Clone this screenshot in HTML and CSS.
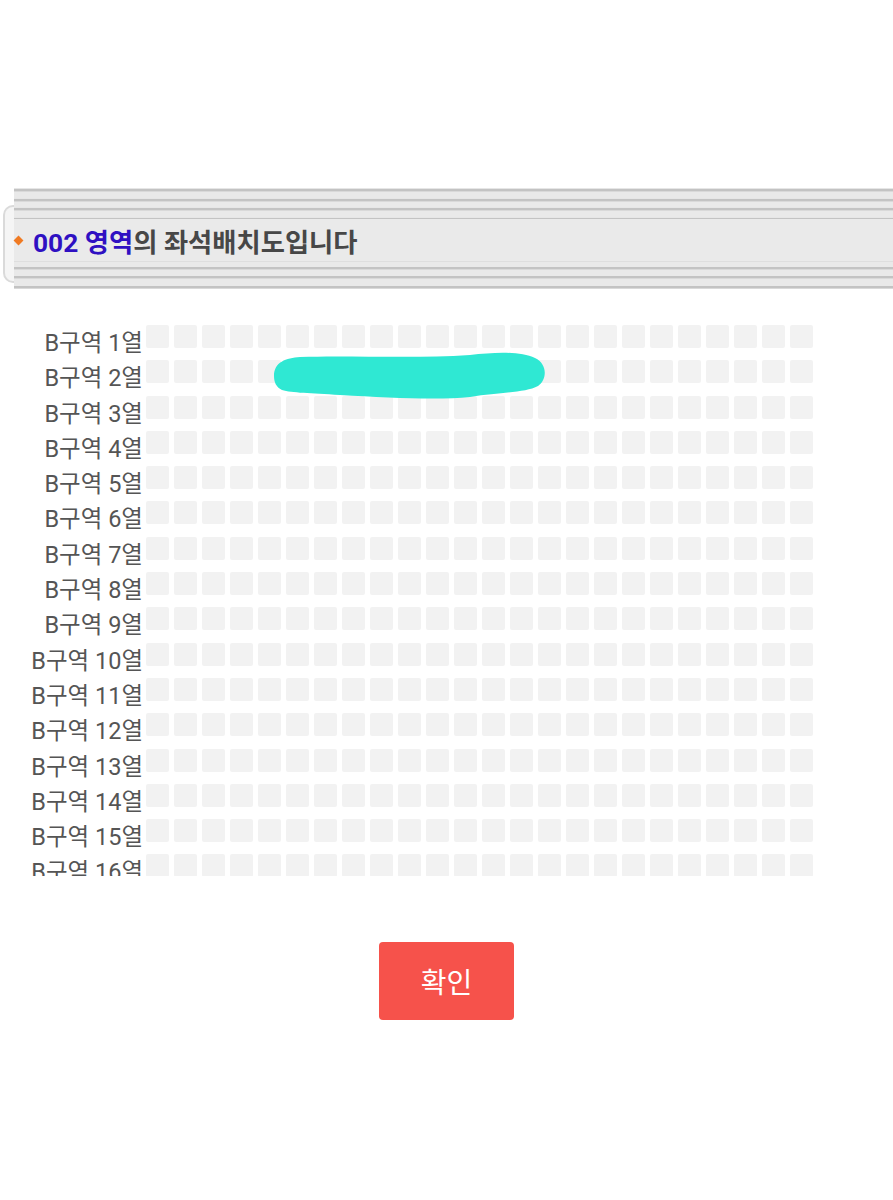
FILE: index.html
```html
<!DOCTYPE html>
<html lang="ko">
<head>
    <meta charset="UTF-8">
    <meta name="viewport" content="width=device-width, initial-scale=1.0">
    <title>좌석배치도</title>
    <link rel="stylesheet" href="styles.css">
</head>
<body>
    <div class="page">
        <header class="zone-bar">
            <span class="bar-cap"></span>
            <div class="bar-body">
                <div class="stripes stripes-top"></div>
                <h2 class="zone-title">
                    <span class="bullet"></span>
                    <span class="title-text"><span class="zone-name">002 영역</span>의 좌석배치도입니다</span>
                </h2>
                <div class="stripes stripes-bottom"></div>
            </div>
        </header>

        <div class="seat-map">
            <div id="seatRows"></div>
            <svg class="scribble" viewBox="0 0 280 52" xmlns="http://www.w3.org/2000/svg">
                <path d="M4 26 C4 12 16 8 30 7 C80 5 140 9 200 5 C225 2 250 1 265 8 C278 14 277 30 268 36 C255 43 230 42 200 47 C170 50 120 48 70 45 C40 43 22 43 12 40 C6 37 4 32 4 26 Z"></path>
            </svg>
        </div>

        <div class="actions">
            <button type="button" class="confirm-button">확인</button>
        </div>
    </div>

    <script>
        const seatRows = document.getElementById('seatRows');
        const ROWS = 16;
        const SEATS = 24;

        for (let r = 1; r <= ROWS; r++) {
            const row = document.createElement('div');
            row.className = 'seat-row';

            const label = document.createElement('span');
            label.className = 'row-label';
            label.textContent = `B구역 ${r}열`;
            row.appendChild(label);

            const seats = document.createElement('div');
            seats.className = 'seats';
            for (let s = 0; s < SEATS; s++) {
                const seat = document.createElement('span');
                seat.className = 'seat';
                seats.appendChild(seat);
            }
            row.appendChild(seats);
            seatRows.appendChild(row);
        }
    </script>
</body>
</html>
```

FILE: styles.css
```css
:root {
    --bar-bg: #e9e9e9;
    --bar-line: #c3c3c3;
    --zone-color: #2f10c2;
    --title-color: #474747;
    --label-color: #555;
    --seat-color: #f2f2f2;
    --button-color: #f6524b;
}

* {
    margin: 0;
    padding: 0;
    box-sizing: border-box;
}

body {
    font-family: Roboto, "Noto Sans CJK KR", sans-serif;
    background-color: white;
    color: var(--label-color);
}

.page {
    padding-top: 188px;
}

/* zone header */
.zone-bar {
    display: flex;
    align-items: flex-start;
}

.bar-cap {
    width: 11px;
    height: 78px;
    margin-top: 17px;
    margin-left: 3px;
    border: 2px solid #dadada;
    border-right: none;
    border-radius: 10px 0 0 10px;
    background-color: #f5f5f5;
}

.bar-body {
    flex: 1;
}

.stripes-top {
    height: 31px;
    background: repeating-linear-gradient(to bottom,
        #e6e6e6 0 1px,
        var(--bar-line) 1px 3px,
        #d9d9d9 3px 4px,
        var(--bar-bg) 4px 9.5px);
}

.stripes-bottom {
    height: 27px;
    background: repeating-linear-gradient(to bottom,
        var(--bar-bg) 0 5px,
        var(--bar-line) 5px 7px,
        #d9d9d9 7px 8px,
        var(--bar-bg) 8px 9.5px);
}

.zone-title {
    height: 43px;
    display: flex;
    align-items: center;
    background-color: #eaeaea;
    border-bottom: 1px solid #dedede;
    font-size: 26.3px;
    font-weight: bold;
    color: var(--title-color);
}

.bullet {
    flex-shrink: 0;
    width: 7px;
    height: 7px;
    margin: 0 11px 0 1px;
    background-color: #f07a22;
    transform: rotate(45deg);
}

.title-text {
    white-space: nowrap;
}

.zone-name {
    color: var(--zone-color);
}

/* seat map */
.seat-map {
    position: relative;
    height: 556px;
    margin-top: 31px;
    padding-top: 5px;
    overflow: hidden;
}

.seat-row {
    display: flex;
    height: 35.3px;
}

.row-label {
    width: 143px;
    padding-top: 7px;
    text-align: right;
    font-size: 23.5px;
    line-height: 23px;
    color: var(--label-color);
    white-space: nowrap;
}

.seats {
    display: flex;
    gap: 5px;
    margin-left: 3px;
}

.seat {
    width: 23px;
    height: 23px;
    border-radius: 2px;
    background-color: var(--seat-color);
}

.scribble {
    position: absolute;
    left: 270px;
    top: 30px;
    width: 280px;
    height: 52px;
}

.scribble path {
    fill: #2fe8d3;
}

/* confirm */
.actions {
    display: flex;
    justify-content: center;
    margin-top: 66px;
}

.confirm-button {
    width: 135px;
    height: 78px;
    border: none;
    border-radius: 4px;
    background-color: var(--button-color);
    color: white;
    font-family: inherit;
    font-size: 28px;
    cursor: pointer;
}
```
